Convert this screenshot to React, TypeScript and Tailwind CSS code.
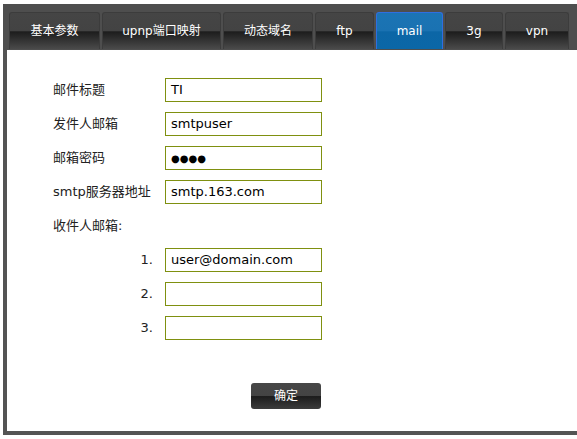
import React from "react";

const tabs = [
  { label: "基本参数", w: 91 },
  { label: "upnp端口映射", w: 119 },
  { label: "动态域名", w: 90 },
  { label: "ftp", w: 59 },
  { label: "mail", w: 67, active: true },
  { label: "3g", w: 58 },
  { label: "vpn", w: 64 },
];

const fields = [
  { label: "邮件标题", value: "TI" },
  { label: "发件人邮箱", value: "smtpuser" },
  { label: "邮箱密码", value: "••••", password: true },
  { label: "smtp服务器地址", value: "smtp.163.com" },
];

const recipients = ["user@domain.com", "", ""];

const font = { fontFamily: '"DejaVu Sans", "Noto Sans CJK SC", sans-serif' };

function Tab({ label, w, active }: { label: string; w: number; active?: boolean }) {
  return (
    <div
      style={{ width: w }}
      className={
        active
          ? "h-[37px] rounded-t-[3px] border border-b-0 border-[#2f6fe0] bg-[linear-gradient(#1b74b4_0%,#1a72b2_50%,#0c66a6_52%,#0b67a7_100%)] flex items-center justify-center text-[12px] text-white"
          : "h-[37px] rounded-t-[3px] border border-b-0 border-[#3c3c3c] bg-[linear-gradient(#454545_0%,#434343_50%,#1c1c1c_52%,#4a4a4a_100%)] flex items-center justify-center text-[12px] text-white"
      }
    >
      {label}
    </div>
  );
}

export default function App() {
  return (
    <div className="w-[577px] h-[439px] bg-white pt-[4px] pl-[3px] overflow-hidden" style={font}>
      <div className="w-[580px] h-[431px] flex flex-col">
        <div className="h-[46px] bg-[#4e4e4e] pl-[6px] pt-[8px] flex gap-[2px] items-start">
          {tabs.map((t) => (
            <Tab key={t.label} {...t} />
          ))}
        </div>
        <div className="flex-1 border-l-[4px] border-b-[4px] border-[#545454] bg-white pl-[46px] pt-[28px] text-[13px] text-[#222]">
          <div className="flex flex-col gap-[10px]">
            {fields.map((f) => (
              <div key={f.label} className="flex items-center h-[24px]">
                <div className="w-[112px]">{f.label}</div>
                <div className="w-[157px] h-[24px] border border-[#7f9010] flex items-center pl-[5px] text-[13px] text-black">
                  {f.password ? <span className="text-[10px]">●●●●</span> : f.value}
                </div>
              </div>
            ))}
            <div className="flex items-center h-[24px]">收件人邮箱:</div>
            {recipients.map((r, i) => (
              <div key={i} className="flex items-center h-[24px]">
                <div className="w-[100px] text-right">{i + 1}.</div>
                <div className="w-[12px]" />
                <div className="w-[157px] h-[24px] border border-[#7f9010] flex items-center pl-[5px] text-[13px] text-black">
                  {r}
                </div>
              </div>
            ))}
          </div>
          <div className="pl-[198px] pt-[43px]">
            <button className="w-[70px] h-[26px] rounded-[3px] bg-[linear-gradient(#474747_0%,#434343_50%,#1c1c1c_52%,#3c3c3c_100%)] text-white text-[12px] flex items-center justify-center">
              确定
            </button>
          </div>
        </div>
      </div>
    </div>
  );
}
